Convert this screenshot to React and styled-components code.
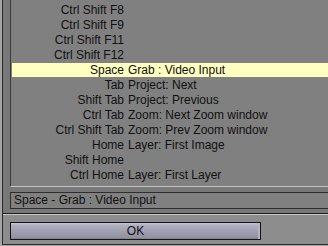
import React from 'react'
import styled, { createGlobalStyle } from 'styled-components'

const GlobalStyle = createGlobalStyle`
  html, body {
    margin: 0;
    padding: 0;
    background: #a6a6a6;
  }
  body {
    font-family: "Liberation Sans", Arial, Helvetica, sans-serif;
  }
`

const rows = [
  { key: 'Ctrl Shift F8', desc: '' },
  { key: 'Ctrl Shift F9', desc: '' },
  { key: 'Ctrl Shift F11', desc: '' },
  { key: 'Ctrl Shift F12', desc: '' },
  { key: 'Space', desc: 'Grab : Video Input', active: true },
  { key: 'Tab', desc: 'Project: Next' },
  { key: 'Shift Tab', desc: 'Project: Previous' },
  { key: 'Ctrl Tab', desc: 'Zoom: Next Zoom window' },
  { key: 'Ctrl Shift Tab', desc: 'Zoom: Prev Zoom window' },
  { key: 'Home', desc: 'Layer: First Image' },
  { key: 'Shift Home', desc: '' },
  { key: 'Ctrl Home', desc: 'Layer: First Layer' }
]

const Screen = () => {
  return (
    <>
      <GlobalStyle />
      <Page>
        <Window>
          <Upper>
            <List>
              {rows.map(r => (
                <Row key={r.key} $active={r.active}>
                  <Key>{r.key}</Key>
                  <Desc>{r.desc}</Desc>
                </Row>
              ))}
            </List>
            <Status>Space - Grab : Video Input</Status>
          </Upper>
          <Lower>
            <OkButton>OK</OkButton>
          </Lower>
        </Window>
      </Page>
    </>
  )
}

export default Screen

const Page = styled.div`
  width: 328px;
  height: 246px;
  overflow: hidden;
  background: #a6a6a6;
  padding-left: 2px;
  box-sizing: border-box;
`

const Window = styled.div`
  width: 340px;
  display: flex;
  flex-direction: column;
  border-left: 1px solid #2a2a2a;
  border-bottom: 1px solid #2a2a2a;
`

const Upper = styled.div`
  height: 214px;
  box-sizing: border-box;
  background: #787878;
  padding-left: 7px;
  border-bottom: 1px solid #1c1c1c;
  display: flex;
  flex-direction: column;
  gap: 5px;
`

const List = styled.div`
  height: 187px;
  box-sizing: border-box;
  background: #808080;
  border-left: 1px solid #3a3a3a;
  border-bottom: 1px solid #c4c4c4;
  padding-top: 3px;
  display: flex;
  flex-direction: column;
`

const Row = styled.div`
  height: 14px;
  margin: 0 0 1px 1px;
  display: flex;
  align-items: center;
  gap: 4px;
  font-size: 12px;
  line-height: 14px;
  color: #101010;
  white-space: nowrap;
  background: ${p => (p.$active ? '#ffffc2' : 'transparent')};
`

const Key = styled.span`
  width: 112px;
  text-align: right;
  flex: none;
`

const Desc = styled.span`
  flex: 1;
`

const Status = styled.div`
  height: 17px;
  box-sizing: border-box;
  background: #808080;
  border: 1px solid #2e2e2e;
  border-right: none;
  padding-left: 3px;
  font-size: 12px;
  line-height: 15px;
  color: #101010;
  white-space: nowrap;
`

const Lower = styled.div`
  height: 30px;
  box-sizing: border-box;
  background: #8d8d8d;
  border-top: 1px solid #cacaca;
  padding: 7px 0 0 7px;
`

const OkButton = styled.button`
  display: block;
  width: 251px;
  height: 18px;
  margin: 0;
  padding: 0;
  box-sizing: border-box;
  border: 1px solid #141414;
  background: linear-gradient(to bottom, #c6c6d4 0px, #b0b0c0 2px, #a0a0b0 8px, #8e8e9e 100%);
  box-shadow: inset -2px 0 0 #b4b4c4, inset 0 -1px 0 #84848f;
  font-family: "Liberation Sans", Arial, Helvetica, sans-serif;
  font-size: 12px;
  line-height: 16px;
  color: #101010;
  text-align: center;
`
